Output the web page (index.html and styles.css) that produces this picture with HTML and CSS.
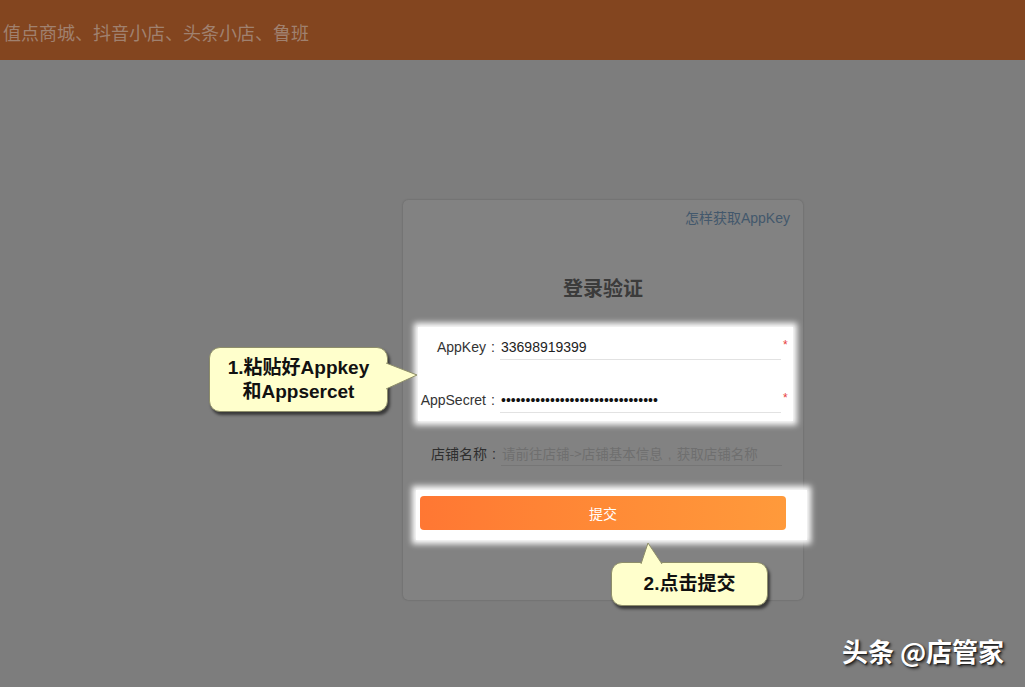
FILE: index.html
```html
<!DOCTYPE html>
<html lang="zh-CN">
<head>
<meta charset="utf-8">
<title>登录验证</title>
<link rel="stylesheet" href="styles.css">
</head>
<body>
<header class="topbar"><span class="brand">值点商城、抖音小店、头条小店、鲁班</span></header>
<main class="stage">
  <section class="card">
    <div class="card-top"><a class="help">怎样获取AppKey</a></div>
    <h2 class="title">登录验证</h2>
    <div class="focus focus-fields">
      <div class="row">
        <label class="lbl">AppKey<span class="colon">:</span></label>
        <div class="field">33698919399</div>
        <span class="req">*</span>
      </div>
      <div class="row row-gap">
        <label class="lbl">AppSecret<span class="colon">:</span></label>
        <div class="field dots">••••••••••••••••••••••••••••••••</div>
        <span class="req">*</span>
      </div>
    </div>
    <div class="row row-dim">
      <label class="lbl">店铺名称<span class="colon">:</span></label>
      <div class="field placeholder">请前往店铺-&gt;店铺基本信息<span class="colon">,</span>获取店铺名称</div>
    </div>
    <div class="focus focus-btn">
      <button class="submit" type="button">提交</button>
    </div>
  </section>
</main>

<div class="callout callout-1">
  <svg class="tail tail-right" width="34" height="28" viewBox="0 0 34 28">
    <polygon points="0,1 31,13 0,27" fill="#ffffcc"/>
    <polyline points="0,1 31,13 0,27" fill="none" stroke="#8e8e6a" stroke-width="1"/>
  </svg>
  <p class="callout-text">1.粘贴好Appkey<br>和Appsercet</p>
</div>

<div class="callout callout-2">
  <svg class="tail tail-up" width="24" height="22" viewBox="0 0 24 22">
    <polygon points="1,22 8,1 22,22" fill="#ffffcc"/>
    <polyline points="1,22 8,1 22,22" fill="none" stroke="#8e8e6a" stroke-width="1"/>
  </svg>
  <p class="callout-text">2.点击提交</p>
</div>

<div class="watermark">头条 @店管家</div>
</body>
</html>
```

FILE: styles.css
```css
html, body {
  margin: 0;
  padding: 0;
}
body {
  width: 1025px;
  height: 687px;
  overflow: hidden;
  background: #7d7d7d;
  font-family: "Liberation Sans", "Noto Sans CJK SC", sans-serif;
  position: relative;
}
.topbar {
  height: 60px;
  background: #83451f;
  display: flex;
  align-items: center;
  padding-left: 3px;
  box-sizing: border-box;
}
.brand {
  font-family: "Noto Sans CJK SC", sans-serif;
  font-size: 18px;
  color: #a0816f;
  line-height: 24px;
  margin-top: 4px;
}
.stage {
  padding-top: 140px;
  padding-left: 403px;
}
.card {
  width: 400px;
  height: 400px;
  box-sizing: border-box;
  background: #828282;
  border-radius: 5px;
  box-shadow: 0 0 2px rgba(0,0,0,0.25);
  display: flex;
  flex-direction: column;
}
.card-top {
  display: flex;
  justify-content: flex-end;
  padding: 9px 13px 0 0;
}
.help {
  font-size: 14px;
  line-height: 18px;
  color: #43586c;
  font-family: "Liberation Sans", "Noto Sans CJK SC", sans-serif;
}
.title {
  margin: 47px 0 0;
  text-align: center;
  font-size: 20px;
  line-height: 28px;
  font-weight: bold;
  color: #3b3b3b;
  font-family: "Noto Sans CJK SC", sans-serif;
}
.focus {
  background: #ffffff;
  box-shadow: 0 0 6px 4px #ffffff;
}
.focus-fields {
  margin: 25px 0 0 15px;
  width: 375px;
  padding: 8px 0 8px 0;
  box-sizing: border-box;
}
.row {
  display: flex;
  align-items: flex-start;
  padding-left: 1px;
  font-size: 14px;
}
.row-gap {
  margin-top: 28px;
}
.lbl {
  width: 81px;
  text-align: right;
  line-height: 24px;
  color: #333333;
  white-space: nowrap;
}
.colon {
  display: inline-block;
  width: 14px;
  text-align: center;
  font-family: "Liberation Sans", sans-serif;
}
.field {
  width: 280px;
  height: 24px;
  line-height: 24px;
  border-bottom: 1px solid #e2e2e2;
  color: #222222;
  padding-left: 1px;
  box-sizing: content-box;
  white-space: nowrap;
  overflow: hidden;
}
.dots {
  letter-spacing: 0;
  color: #111111;
}
.req {
  color: #e8403c;
  font-size: 12px;
  line-height: 20px;
  margin-left: 2px;
}
.row-dim {
  margin: 20px 0 0 16px;
}
.row-dim .lbl {
  color: #2e2e2e;
  font-family: "Noto Sans CJK SC", sans-serif;
}
.placeholder {
  color: #6f6f6f;
  border-bottom-color: #767676;
  font-family: "Noto Sans CJK SC", sans-serif;
  font-size: 13.5px;
}
.focus-btn {
  margin: 24px 0 0 13px;
  width: 391px;
  padding: 6px 0 10px 4px;
  box-sizing: border-box;
}
.submit {
  display: block;
  width: 366px;
  height: 34px;
  border: 0;
  border-radius: 4px;
  background: linear-gradient(90deg, #ff7733 0%, #ff8a36 50%, #ff9a3b 100%);
  color: #ffffff;
  font-size: 14px;
  font-family: "Noto Sans CJK SC", sans-serif;
  padding: 0;
}

/* annotation callouts */
.callout {
  position: absolute;
  background: #ffffcc;
  border: 1px solid #8e8e6a;
  border-radius: 11px;
  box-shadow: 2px 3px 3px rgba(0,0,0,0.55);
  box-sizing: border-box;
  display: flex;
  align-items: center;
  justify-content: center;
}
.callout-1 {
  left: 209px;
  top: 347px;
  width: 179px;
  height: 65px;
}
.callout-2 {
  left: 611px;
  top: 562px;
  width: 157px;
  height: 44px;
}
.tail {
  position: absolute;
  overflow: visible;
}
.tail-right {
  left: 176px;
  top: 14px;
}
.tail-up {
  left: 28px;
  top: -21px;
}
.callout-text {
  margin: 0;
  text-align: center;
  font-size: 19px;
  line-height: 24px;
  font-weight: bold;
  color: #111111;
  font-family: "Liberation Sans", "Noto Sans CJK SC", sans-serif;
  position: relative;
}
.watermark {
  position: absolute;
  left: 842px;
  top: 635px;
  font-size: 26px;
  line-height: 32px;
  font-weight: bold;
  color: #ffffff;
  font-family: "Noto Sans CJK SC", sans-serif;
  text-shadow: 1px 1px 1px #222, 2px 2px 3px rgba(0,0,0,0.6);
  white-space: nowrap;
}
```
